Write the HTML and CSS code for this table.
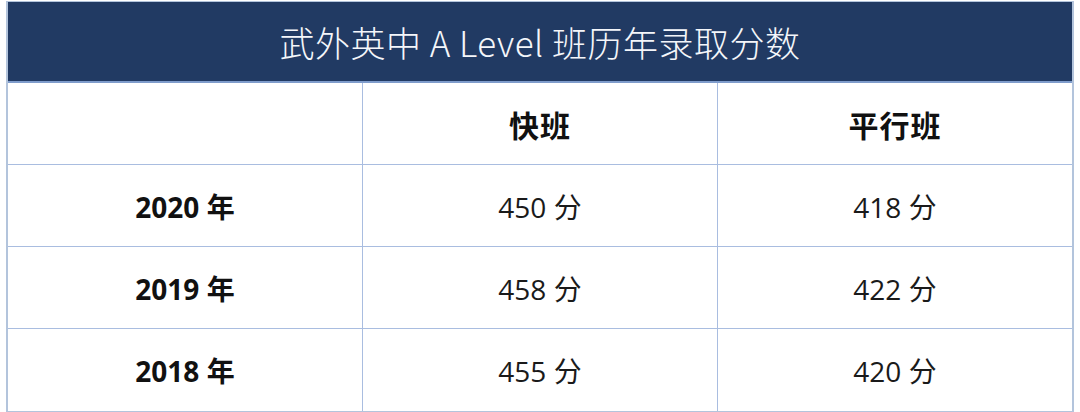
FILE: index.html
```html
<!DOCTYPE html>
<html lang="zh">
<head>
<meta charset="utf-8">
<link rel="stylesheet" href="styles.css">
</head>
<body>
<div class="table">
  <div class="title">武外英中 A Level 班历年录取分数</div>
  <div class="grid">
    <div class="cell"></div>
    <div class="cell head">快班</div>
    <div class="cell head">平行班</div>
    <div class="cell year">2020 年</div>
    <div class="cell">450 分</div>
    <div class="cell">418 分</div>
    <div class="cell year">2019 年</div>
    <div class="cell">458 分</div>
    <div class="cell">422 分</div>
    <div class="cell year">2018 年</div>
    <div class="cell">455 分</div>
    <div class="cell">420 分</div>
  </div>
</div>
</body>
</html>
```
FILE: styles.css
```css
html, body {
  margin: 0;
  padding: 0;
  background: #ffffff;
}
body {
  padding: 1px 0 0 6px;
  font-family: "Open Sans", "Noto Sans CJK SC", sans-serif;
}
.table {
  width: 1068px;
  border: 2px solid #b3c4dc;
  border-top: 1px solid #b3c4dc;
  box-sizing: border-box;
}
.title {
  height: 81px;
  background: #213a63;
  color: #f4f6fa;
  font-family: "Noto Sans CJK SC", sans-serif;
  font-size: 35px;
  font-weight: 300;
  display: flex;
  align-items: center;
  justify-content: center;
  border-bottom: 2px solid #7f9ccb;
  box-sizing: border-box;
  letter-spacing: 0.5px;
}
.grid {
  display: grid;
  grid-template-columns: 355px 355px 1fr;
  grid-auto-rows: 82px;
}
.cell {
  display: flex;
  align-items: center;
  justify-content: center;
  font-size: 28px;
  color: #1a1a1a;
  border-right: 1px solid #a9bde0;
  border-bottom: 1px solid #a9bde0;
}
.cell:nth-child(3n) {
  border-right: none;
}
.cell:nth-last-child(-n+3) {
  border-bottom: none;
}
.head, .year {
  font-weight: 700;
  color: #111;
}
.head {
  font-size: 30px;
  letter-spacing: 1px;
}
```
